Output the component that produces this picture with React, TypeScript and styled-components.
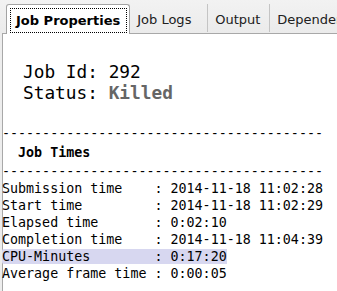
import styled, { createGlobalStyle } from "styled-components";

const GlobalStyle = createGlobalStyle`
  body {
    margin: 0;
    background: #ededed;
  }
`;

const Window = styled.div`
  width: 337px;
  height: 291px;
  overflow: hidden;
  background: #ededed;
  display: flex;
  flex-direction: column;
`;

const TabBar = styled.div`
  height: 33px;
  box-sizing: border-box;
  padding: 4px 0 0 6px;
  display: flex;
  align-items: flex-start;
  background: linear-gradient(#f2f2f2, #ebebeb);
  font-family: "DejaVu Sans", "Liberation Sans", sans-serif;
  font-size: 13px;
  color: #202020;
  white-space: nowrap;
  position: relative;
  z-index: 1;
`;

const ActiveTab = styled.div`
  height: 30px;
  box-sizing: border-box;
  padding: 3px 2px 1px 3px;
  border: 1px solid #a3a3a3;
  border-bottom: none;
  border-radius: 3px 3px 0 0;
  background: #fff;
  display: flex;
  flex-shrink: 0;
`;

const Focus = styled.div`
  flex: 1;
  border: 1px dotted #000;
  padding: 0 6px 0 5px;
  display: flex;
  align-items: center;
  font-weight: bold;
  color: #000;
`;

const Tab = styled.div<{ $width: number }>`
  width: ${(p) => p.$width}px;
  height: 28px;
  box-sizing: border-box;
  padding: 2px 0 0 7px;
  display: flex;
  align-items: center;
  flex-shrink: 0;
  border-right: 1px solid #c4c4c4;
  &:last-child {
    border-right: none;
  }
`;

const Panel = styled.div`
  flex: 1;
  margin-left: 2px;
  border-top: 1px solid #a8a8a8;
  border-left: 1px solid #a8a8a8;
  background: #fff;
  font-family: "DejaVu Sans Mono", "Liberation Mono", monospace;
  color: #000;
  white-space: pre;
`;

const Header = styled.div`
  padding: 27px 0 0 20px;
  font-size: 17.8px;
  margin-bottom: 22px;
`;

const Killed = styled.span`
  font-weight: bold;
  color: #666;
`;

const Line = styled.div`
  font-size: 13.33px;
  line-height: 17px;
  height: 17px;
  margin-left: -1px;
`;

const Rule = styled(Line)`
  color: #000;
`;

const Title = styled(Line)`
  font-weight: bold;
  margin-top: 2px;
  margin-bottom: 2px;
`;

const Selected = styled.span`
  background: #d7d7f0;
  border-radius: 2px 0 0 2px;
`;

const dashes = "-".repeat(40);

const times: [string, string][] = [
  ["Submission time", "2014-11-18 11:02:28"],
  ["Start time", "2014-11-18 11:02:29"],
  ["Elapsed time", "0:02:10"],
  ["Completion time", "2014-11-18 11:04:39"],
  ["CPU-Minutes", "0:17:20"],
  ["Average frame time", "0:00:05"],
];

export default function App() {
  return (
    <>
      <GlobalStyle />
      <Window>
        <TabBar>
          <ActiveTab>
            <Focus>Job Properties</Focus>
          </ActiveTab>
          <Tab $width={78}>Job Logs</Tab>
          <Tab $width={62}>Output</Tab>
          <Tab $width={80}>Dependencies</Tab>
        </TabBar>
        <Panel>
          <Header>
            <div>Job Id: 292</div>
            <div>
              Status: <Killed>Killed</Killed>
            </div>
          </Header>
          <Rule>{dashes}</Rule>
          <Title>{"  Job Times"}</Title>
          <Rule>{dashes}</Rule>
          {times.map(([label, value]) => {
            const text = `${label.padEnd(19, " ")}: ${value}`;
            return (
              <Line key={label}>
                {label === "CPU-Minutes" ? <Selected>{text}</Selected> : text}
              </Line>
            );
          })}
        </Panel>
      </Window>
    </>
  );
}
